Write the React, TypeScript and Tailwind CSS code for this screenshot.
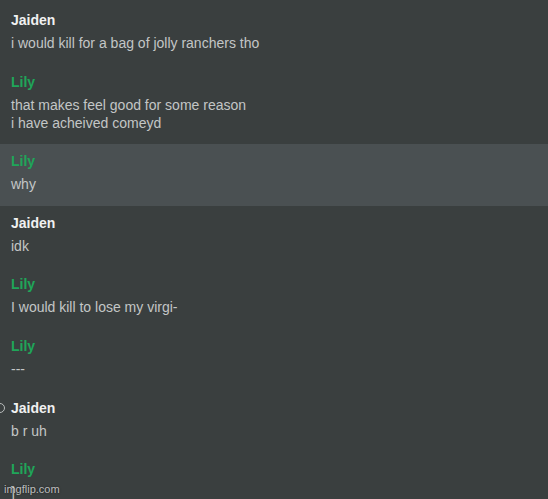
import React from 'react';

type Msg = {
  name: 'Jaiden' | 'Lily';
  lines: string[];
  active?: boolean;
  icon?: boolean;
};

const messages: Msg[] = [
  { name: 'Jaiden', lines: ['i would kill for a bag of jolly ranchers tho'] },
  { name: 'Lily', lines: ['that makes feel good for some reason', 'i have acheived comeyd'] },
  { name: 'Lily', lines: ['why'], active: true },
  { name: 'Jaiden', lines: ['idk'] },
  { name: 'Lily', lines: ['I would kill to lose my virgi-'] },
  { name: 'Lily', lines: ['---'] },
  { name: 'Jaiden', lines: ['b r uh'], icon: true },
  { name: 'Lily', lines: [']'] },
];

const Message: React.FC<{ msg: Msg }> = ({ msg }) => {
  return (
    <div className={`relative px-[11px] pt-[8px] pb-[12.6px] ${msg.active ? 'bg-[#4a5052]' : ''}`}>
      {msg.icon && (
        <span className="absolute left-[-5px] top-[12px] w-[10px] h-[10px] rounded-full border border-[#b8bcbc]" />
      )}
      <div
        className={`h-[18px] leading-[18px] text-[14px] font-bold ${msg.name === 'Lily' ? 'text-[#1fa659]' : 'text-[#f0f1f1]'}`}
      >
        {msg.name}
      </div>
      <div className="mt-[5px]">
        {msg.lines.map((line, i) => (
          <div key={i} className="h-[18px] leading-[18px] text-[14px] text-[#c3c6c6]">
            {line}
          </div>
        ))}
      </div>
    </div>
  );
};

export default function App() {
  return (
    <div
      className="relative w-[548px] h-[499px] overflow-hidden bg-[#3a3f3f] pt-[3px]"
      style={{ fontFamily: '"Liberation Sans", Arial, sans-serif' }}
    >
      <div className="flex flex-col">
        {messages.map((m, i) => (
          <Message key={i} msg={m} />
        ))}
      </div>
      <div className="absolute left-[4px] bottom-[3px] text-[11px] leading-[13px] text-white/70 [text-shadow:0_0_2px_rgba(0,0,0,0.6)]">
        imgflip.com
      </div>
    </div>
  );
}
